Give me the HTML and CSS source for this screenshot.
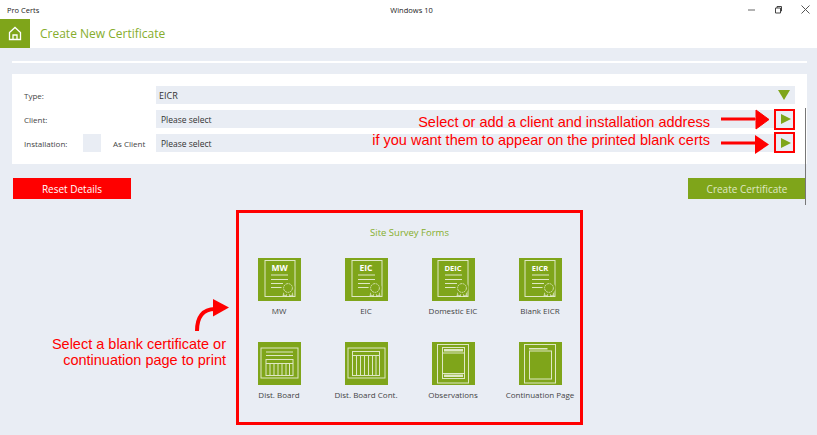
FILE: index.html
```html
<!DOCTYPE html>
<html lang="en">
<head>
  <meta charset="UTF-8">
  <title>Pro Certs</title>
  <link rel="stylesheet" href="styles.css">
</head>
<body>
  <svg class="defs" width="0" height="0">
    <symbol id="rosette" viewBox="0 0 43 43">
      <path class="thin" d="M26 34l-1 4 2-1 1 2 1-4M31 35l1 4 1-2 2 1-1-4"/>
      <circle class="fill" cx="30" cy="30" r="6.5"/>
      <circle class="thin" cx="30" cy="30" r="4.4" stroke-dasharray="2 .6"/>
    </symbol>
  </svg>

  <div class="titlebar">
    <span class="app-name">Pro Certs</span>
    <span class="win-name">Windows 10</span>
    <div class="win-controls">
      <svg width="9" height="9" viewBox="0 0 9 9"><path d="M1 5h7" stroke="#666" fill="none"/></svg>
      <svg width="9" height="9" viewBox="0 0 9 9"><path d="M1.5 3h5v5h-5zM3 3V1.5h4.500V6H6.500" stroke="#444" fill="none"/></svg>
      <svg width="9" height="9" viewBox="0 0 9 9"><path d="M.5.5l8 8M8.500.5l-8 8" stroke="#555" fill="none"/></svg>
    </div>
  </div>

  <div class="header">
    <div class="home">
      <svg width="14" height="15" viewBox="0 0 14 15"><path d="M1.500 6.500L7 1.500l5.500 5V13.500h-11zM5 13.500V9h4v4.500" fill="none" stroke="#fff" stroke-width="1.300"/></svg>
    </div>
    <h1>Create New Certificate</h1>
  </div>

  <div class="content">
    <div class="divider"></div>

    <div class="card">
      <div class="row">
        <label>Type:</label>
        <div class="field field-type">EICR<span class="tri-down"></span></div>
      </div>
      <div class="row">
        <label>Client:</label>
        <div class="field">Please select<span class="tri-right"></span></div>
      </div>
      <div class="row">
        <div class="install">
          <label>Installation:</label>
          <span class="check"></span>
          <label>As Client</label>
        </div>
        <div class="field">Please select<span class="tri-right"></span></div>
      </div>
    </div>

    <div class="actions">
      <button class="btn btn-reset">Reset Details</button>
      <button class="btn btn-create">Create Certificate</button>
    </div>

    <div class="forms">
      <h2>Site Survey Forms</h2>
      <div class="form-grid">
        <div class="tile">
          <svg class="icon" viewBox="0 0 43 43">
            <rect class="line" x="7" y="2.500" width="30" height="36"/>
            <text class="cert-text" x="21.500" y="12.500">MW</text>
            <path class="line" d="M13 17h17M13 21.500h17M13 25.500h12M13 29.500h11"/>
            <use href="#rosette" width="43" height="43"/>
          </svg>
          <span>MW</span>
        </div>
        <div class="tile">
          <svg class="icon" viewBox="0 0 43 43">
            <rect class="line" x="7" y="2.500" width="30" height="36"/>
            <text class="cert-text" x="21" y="12.500">EIC</text>
            <path class="line" d="M13 17h17M13 21.500h17M13 25.500h12M13 29.500h11"/>
            <use href="#rosette" width="43" height="43"/>
          </svg>
          <span>EIC</span>
        </div>
        <div class="tile">
          <svg class="icon" viewBox="0 0 43 43">
            <rect class="line" x="6" y="2.500" width="30" height="36"/>
            <text class="cert-text cert-small" x="21" y="12.500">DEIC</text>
            <path class="line" d="M13 17h17M13 21.500h17M13 25.500h12M13 29.500h11"/>
            <use href="#rosette" width="43" height="43"/>
          </svg>
          <span>Domestic EIC</span>
        </div>
        <div class="tile">
          <svg class="icon" viewBox="0 0 43 43">
            <rect class="line" x="6" y="2.500" width="30" height="36"/>
            <text class="cert-text cert-small" x="21" y="12.500">EICR</text>
            <path class="line" d="M13 17h17M13 21.500h17M13 25.500h12M13 29.500h11"/>
            <use href="#rosette" width="43" height="43"/>
          </svg>
          <span>Blank EICR</span>
        </div>
        <div class="tile">
          <svg class="icon" viewBox="0 0 43 43">
            <rect class="line" x="3" y="6" width="37" height="30"/>
            <path class="line" d="M8 10h27M8 13.500h27"/>
            <rect class="line" x="8" y="17.500" width="27" height="16"/>
            <path class="line" d="M8 21.500h27M12 21.500v12M16 21.500v12M20 21.500v12M24 21.500v12M28 21.500v12M31.500 21.500v12"/>
          </svg>
          <span>Dist. Board</span>
        </div>
        <div class="tile">
          <svg class="icon" viewBox="0 0 43 43">
            <rect class="line" x="3" y="6" width="37" height="30"/>
            <rect class="line" x="7.500" y="9.500" width="27" height="24"/>
            <path class="line" d="M7.500 13.500h27M11.500 13.500v20M15.500 13.500v20M19.500 13.500v20M23.500 13.500v20M27.500 13.500v20M31 13.500v20"/>
          </svg>
          <span>Dist. Board Cont.</span>
        </div>
        <div class="tile">
          <svg class="icon" viewBox="0 0 43 43">
            <rect class="line" x="5.500" y="2.500" width="31" height="38.500"/>
            <rect class="line" x="10.500" y="5.500" width="22" height="31"/>
            <path class="band" d="M12 7h19v2.500H12zM12 32.500h19V35H12z"/>
            <path class="line" d="M10.500 11h22M10.500 31.500h22"/>
          </svg>
          <span>Observations</span>
        </div>
        <div class="tile">
          <svg class="icon" viewBox="0 0 43 43">
            <rect class="line" x="5.500" y="2.500" width="31" height="38.500"/>
            <path class="band" d="M10 6h18.500v1.500H10z"/>
            <rect class="line" x="10.500" y="9" width="22" height="28"/>
          </svg>
          <span>Continuation Page</span>
        </div>
      </div>
    </div>
  </div>

  <!-- annotations drawn on top of the screenshot -->
  <div class="scroll-thumb"></div>
  <div class="note note-top">Select or add a client and installation address<br>if you want them to appear on the printed blank certs</div>
  <div class="note note-left">Select a blank certificate or<br>continuation page to print</div>
  <div class="mark mark-1"></div>
  <div class="mark mark-2"></div>
  <svg class="arrows" width="817" height="435" viewBox="0 0 817 435">
    <path d="M721 119h35v-9l13 9.500-13 9.500v-9.500" fill="#f00" stroke="#f00" stroke-width="1"/>
    <path d="M721 119h34M721 143h34" stroke="#f00" stroke-width="3" fill="none"/>
    <path d="M755 135l14 9.500-14 9.500z" fill="#f00"/>
    <path d="M197 331c0-14 6-22 18-22" stroke="#f00" stroke-width="4" fill="none"/>
    <path d="M213 299l16 8.500-16 9z" fill="#f00"/>
  </svg>
</body>
</html>
```

FILE: styles.css
```css
* {
  box-sizing: border-box;
}

body {
  margin: 0;
  width: 817px;
  height: 435px;
  overflow: hidden;
  position: relative;
  font-family: 'Open Sans', sans-serif;
  background-color: #e9edf4;
  color: #444;
}

.defs {
  position: absolute;
}

.titlebar {
  height: 19px;
  background-color: #fff;
  display: flex;
  align-items: center;
  position: relative;
  padding-left: 7px;
  font-size: 7.5px;
  color: #222;
}

.win-name {
  margin-left: 351px;
}

.win-controls {
  margin-left: auto;
  display: flex;
  gap: 18px;
  padding-right: 7px;
}

.header {
  height: 29px;
  background-color: #fff;
  display: flex;
  align-items: center;
}

.home {
  width: 30px;
  height: 29px;
  background-color: #7fa51a;
  display: flex;
  align-items: center;
  justify-content: center;
}

h1 {
  margin: 0 0 0 10px;
  font-size: 12px;
  font-weight: 400;
  color: #86ad2c;
}

.content {
  padding: 13px 10px 0 12px;
}

.divider {
  height: 2px;
  background-color: #fff;
}

.card {
  margin-top: 11px;
  background-color: #fff;
  padding: 12px;
  display: flex;
  flex-direction: column;
  gap: 6px;
}

.row {
  display: grid;
  grid-template-columns: 132px 1fr;
  height: 18px;
  align-items: center;
}

label {
  font-size: 8px;
  color: #444;
}

.install {
  display: flex;
  align-items: center;
}

.install label:first-child {
  width: 59px;
}

.check {
  width: 18px;
  height: 18px;
  background-color: #e9edf4;
  margin-right: 12px;
}

.field {
  height: 18px;
  background-color: #e9edf4;
  display: flex;
  align-items: center;
  justify-content: space-between;
  padding: 0 4px 0 5px;
  font-size: 8.500px;
  color: #333;
}

.field-type {
  padding-left: 3px;
  font-size: 9px;
}

.tri-down {
  width: 0;
  height: 0;
  border-left: 6px solid transparent;
  border-right: 6px solid transparent;
  border-top: 10px solid #7fa51a;
  margin-right: 1px;
}

.tri-right {
  width: 0;
  height: 0;
  border-top: 5.500px solid transparent;
  border-bottom: 5.500px solid transparent;
  border-left: 10px solid #7fa51a;
  margin-right: 0;
}

.actions {
  margin-top: 14px;
  padding: 0 1px;
  display: flex;
  justify-content: space-between;
}

.btn {
  width: 118px;
  height: 21px;
  border: none;
  padding: 0;
  font-family: 'Open Sans', sans-serif;
  font-size: 10px;
  color: #fff;
}

.btn-reset {
  background-color: #f00;
}

.btn-create {
  background-color: #7fa51a;
  color: #dfe8c4;
}

.forms {
  width: 347px;
  height: 215px;
  margin: 11px auto 0;
  border: 3px solid #f00;
  display: flex;
  flex-direction: column;
  align-items: center;
}

h2 {
  margin: 13px 0 0;
  font-size: 9.500px;
  line-height: 13px;
  font-weight: 400;
  color: #86ad2c;
}

.form-grid {
  margin-top: 19px;
  display: grid;
  grid-template-columns: repeat(4, 87px);
  justify-content: center;
  row-gap: 25px;
}

.tile {
  display: flex;
  flex-direction: column;
  align-items: center;
  gap: 4px;
  font-size: 8px;
  line-height: 12px;
  color: #444;
  white-space: nowrap;
}

.icon {
  width: 43px;
  height: 43px;
  background-color: #7fa51a;
}

.line {
  fill: none;
  stroke: #dfe8c4;
  stroke-width: 1;
}

.thin {
  fill: none;
  stroke: #eef2df;
  stroke-width: .7;
}

.fill {
  fill: #7fa51a;
}

.band {
  fill: #dfe8c4;
}

.cert-text {
  font-family: 'Open Sans', sans-serif;
  font-size: 8.500px;
  font-weight: 700;
  fill: #fff;
  text-anchor: middle;
}

.cert-small {
  font-size: 7.500px;
}

.scroll-thumb {
  position: absolute;
  left: 805px;
  top: 108px;
  width: 1px;
  height: 97px;
  background-color: #777;
}

.note {
  position: absolute;
  font-family: 'Liberation Sans', sans-serif;
  font-size: 14.500px;
  color: #f00;
  text-align: right;
  white-space: nowrap;
}

.note-top {
  right: 107px;
  top: 113px;
  line-height: 18px;
}

.note-left {
  right: 591px;
  top: 336px;
  line-height: 16px;
}

.mark {
  position: absolute;
  left: 774px;
  width: 21px;
  height: 21px;
  border: 2px solid #f00;
}

.mark-1 {
  top: 109px;
}

.mark-2 {
  top: 132px;
}

.arrows {
  position: absolute;
  left: 0;
  top: 0;
  pointer-events: none;
}
```
